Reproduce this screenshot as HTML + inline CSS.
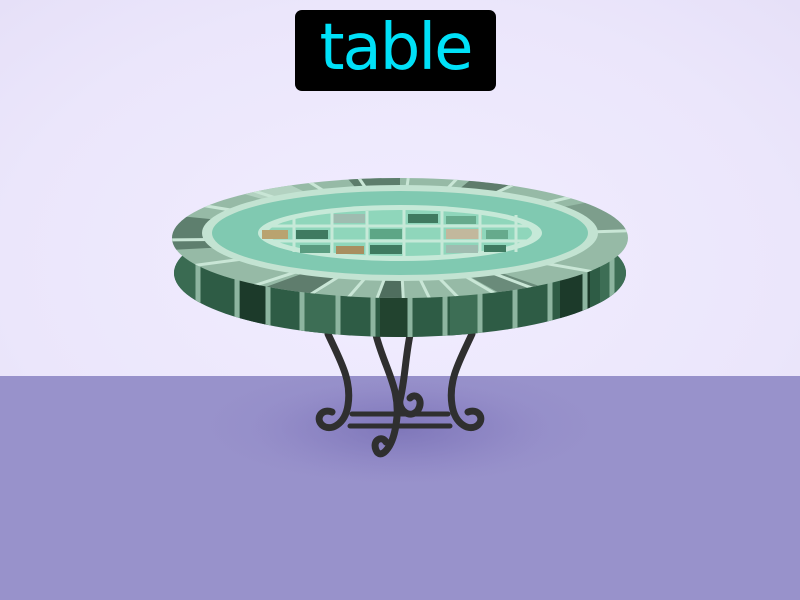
<!DOCTYPE html>
<html><head><meta charset="utf-8"><style>
html,body{margin:0;padding:0;width:800px;height:600px;overflow:hidden}
body{position:relative;background:#ece7fc}
.wall{position:absolute;left:0;top:0;width:800px;height:376px;background:radial-gradient(ellipse at 50% 70%,#f1edff 0%,#ebe6fb 70%,#e6e0f8 100%)}
.floor{position:absolute;left:0;top:376px;width:800px;height:224px;background:radial-gradient(ellipse 200px 60px at 400px 50px,#8a82c2 0%,#958ec9 60%,#9892cb 100%)}
.lbl{position:absolute;left:295px;top:10px;width:201px;height:81px;background:#000;border-radius:7px}
.lbl span{position:absolute;left:0;width:201px;top:2px;text-align:center;font:64px "DejaVu Sans",sans-serif;color:#00e1f8;line-height:72px;letter-spacing:-2px}
svg{position:absolute;left:0;top:0}
</style></head><body>
<div class="wall"></div><div class="floor"></div>
<div class="lbl"><span>table</span></div>
<svg width="800" height="600" viewBox="0 0 800 600">
<defs>
<radialGradient id="sh" cx="0.5" cy="0.5" r="0.5"><stop offset="0" stop-color="#7d75b8" stop-opacity="0.8"/><stop offset="1" stop-color="#8a82c2" stop-opacity="0"/></radialGradient>
<clipPath id="band"><ellipse cx="400" cy="273" rx="226" ry="64"/></clipPath>
<clipPath id="rim"><ellipse cx="400" cy="238" rx="228" ry="60"/></clipPath>
</defs>
<ellipse cx="400" cy="430" rx="150" ry="50" fill="url(#sh)"/>
<g fill="none" stroke="#2f2f2f" stroke-width="7" stroke-linecap="round">
<path d="M328 334 C340 360 352 380 348 405 C345 425 330 432 322 425 C315 418 322 408 332 412"/>
<path d="M472 334 C460 360 448 380 452 405 C455 425 470 432 478 425 C485 418 478 408 468 412"/>
<path d="M376 335 C385 370 402 390 396 425 C392 450 380 460 376 450 C372 440 382 435 386 442"/>
<path d="M410 335 C405 360 405 380 400 400 C398 410 410 420 418 410 C424 400 416 392 410 398"/>
<path d="M352 414 L448 414 M350 426 L450 426" stroke-width="5"/>
</g>
<ellipse cx="400" cy="273" rx="226" ry="64" fill="#2e5c45"/>
<g clip-path="url(#band)">
<rect x="170" y="230" width="30" height="120" fill="#3a6b52"/>
<rect x="240" y="230" width="28" height="120" fill="#1c3a2a"/>
<rect x="300" y="230" width="36" height="120" fill="#3d6e55"/>
<rect x="380" y="230" width="30" height="120" fill="#22432f"/>
<rect x="450" y="230" width="30" height="120" fill="#3d6e55"/>
<rect x="560" y="230" width="30" height="120" fill="#1c3a2a"/>
<rect x="600" y="230" width="30" height="120" fill="#3d6e55"/>
<g stroke="#8db5a0" stroke-width="5">
<line x1="198" y1="230" x2="198" y2="350"/><line x1="237" y1="230" x2="237" y2="350"/><line x1="268" y1="230" x2="268" y2="350"/><line x1="302" y1="230" x2="302" y2="350"/><line x1="338" y1="230" x2="338" y2="350"/><line x1="373" y1="230" x2="373" y2="350"/><line x1="410" y1="230" x2="410" y2="350"/><line x1="445" y1="230" x2="445" y2="350"/><line x1="480" y1="230" x2="480" y2="350"/><line x1="515" y1="230" x2="515" y2="350"/><line x1="550" y1="230" x2="550" y2="350"/><line x1="585" y1="230" x2="585" y2="350"/><line x1="612" y1="230" x2="612" y2="350"/>
</g>
</g>
<ellipse cx="400" cy="238" rx="228" ry="60" fill="#96baa6"/>
<g clip-path="url(#rim)">
<path d="M400 238 L170 215 L170 250 Z" fill="#5e7f6e"/>
<path d="M400 238 L230 300 L290 310 Z" fill="#5f7d6d"/>
<path d="M400 238 L370 320 L405 320 Z" fill="#4f6e5e"/>
<path d="M400 238 L530 310 L580 300 Z" fill="#6a8b7a"/>
<path d="M400 238 L600 200 L630 230 Z" fill="#7d9e8c"/>
<path d="M400 238 L340 170 L400 170 Z" fill="#5d7d6c"/>
<path d="M400 238 L480 172 L530 178 Z" fill="#5f7c6c"/>
<path d="M400 238 L230 190 L280 180 Z" fill="#b3d2c1"/>
<g stroke="#c9e6d6" stroke-width="3">
<line x1="400" y1="238" x2="150" y2="240"/><line x1="400" y1="238" x2="170" y2="200"/><line x1="400" y1="238" x2="220" y2="180"/><line x1="400" y1="238" x2="290" y2="170"/><line x1="400" y1="238" x2="350" y2="165"/><line x1="400" y1="238" x2="410" y2="165"/><line x1="400" y1="238" x2="470" y2="165"/><line x1="400" y1="238" x2="540" y2="172"/><line x1="400" y1="238" x2="600" y2="190"/><line x1="400" y1="238" x2="650" y2="230"/><line x1="400" y1="238" x2="640" y2="280"/><line x1="400" y1="238" x2="590" y2="310"/><line x1="400" y1="238" x2="540" y2="320"/><line x1="400" y1="238" x2="490" y2="330"/><line x1="400" y1="238" x2="445" y2="330"/><line x1="400" y1="238" x2="405" y2="330"/><line x1="400" y1="238" x2="365" y2="330"/><line x1="400" y1="238" x2="320" y2="330"/><line x1="400" y1="238" x2="270" y2="320"/><line x1="400" y1="238" x2="210" y2="300"/><line x1="400" y1="238" x2="160" y2="270"/>
</g>
</g>
<ellipse cx="400" cy="233" rx="198" ry="48" fill="#c3e3d2"/>
<ellipse cx="400" cy="233" rx="188" ry="42" fill="#80c9b1"/>
<ellipse cx="400" cy="233" rx="142" ry="28" fill="#c6e9d8"/>
<ellipse cx="400" cy="233" rx="132" ry="23" fill="#8fd6bb"/>
<g>
<rect x="333" y="214" width="32" height="9" fill="#9fbcb0"/><rect x="408" y="214" width="30" height="9" fill="#3f7a60"/><rect x="446" y="216" width="30" height="8" fill="#66aa8c"/>
<rect x="262" y="230" width="26" height="9" fill="#b9a36f"/><rect x="296" y="230" width="32" height="9" fill="#3f7a60"/><rect x="370" y="229" width="32" height="10" fill="#5da686"/><rect x="446" y="229" width="36" height="10" fill="#c2b89d"/><rect x="486" y="230" width="22" height="9" fill="#66aa8c"/>
<rect x="300" y="245" width="30" height="8" fill="#5a9c80"/><rect x="336" y="246" width="28" height="8" fill="#a88e60"/><rect x="370" y="245" width="32" height="9" fill="#3f7a60"/><rect x="446" y="245" width="32" height="8" fill="#9fbcb0"/><rect x="484" y="245" width="22" height="7" fill="#3f7a60"/>
</g>
<g stroke="#c6e9d8" stroke-width="3">
<line x1="294" y1="215" x2="294" y2="252"/><line x1="332" y1="212" x2="332" y2="255"/><line x1="367" y1="211" x2="367" y2="256"/><line x1="404" y1="210" x2="404" y2="256"/><line x1="442" y1="211" x2="442" y2="256"/><line x1="480" y1="212" x2="480" y2="255"/><line x1="516" y1="215" x2="516" y2="252"/>
<line x1="270" y1="226" x2="530" y2="226"/><line x1="270" y1="241" x2="530" y2="241"/>
</g>
</svg>
</body></html>
